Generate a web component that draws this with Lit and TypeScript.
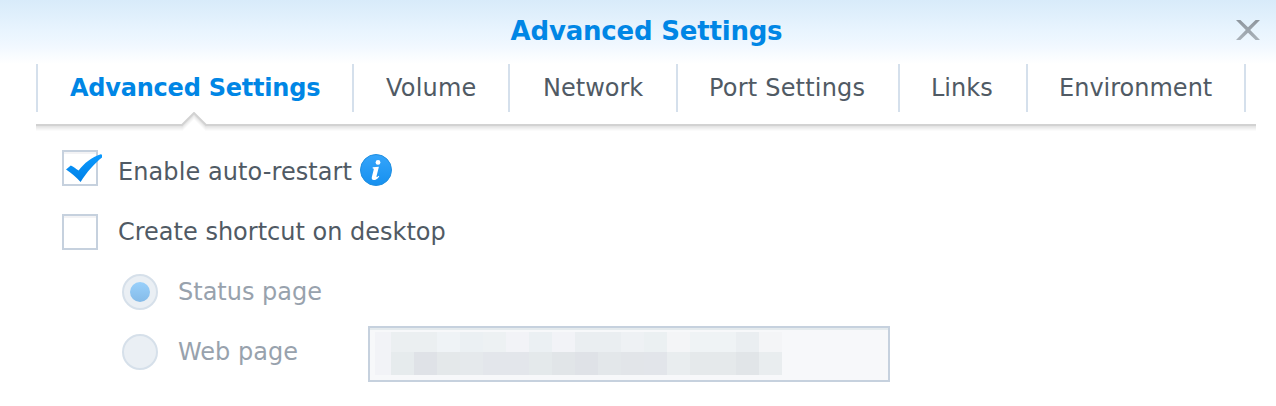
import { LitElement, html, svg, css } from "lit";
import { customElement } from "lit/decorators.js";

const TABS = [
  { id: "advanced", label: "Advanced Settings" },
  { id: "volume", label: "Volume" },
  { id: "network", label: "Network" },
  { id: "port", label: "Port Settings" },
  { id: "links", label: "Links" },
  { id: "environment", label: "Environment" },
];

// Two rows of masking blocks: [width, top colour, bottom colour]
const MASK: [number, string, string][] = [
  [16, "#f2f3f7", "#f2f3f7"],
  [23, "#ebeff1", "#e6ebed"],
  [23, "#ebeff1", "#dfe2e7"],
  [23, "#eff3f6", "#e4e8ea"],
  [23, "#ebf0f3", "#e5e9ec"],
  [23, "#edf1f3", "#e3e6eb"],
  [23, "#f2f3f7", "#e3e6eb"],
  [23, "#ebf0f3", "#e4e9eb"],
  [23, "#f2f3f7", "#e1e5e8"],
  [23, "#eaeef1", "#dfe2e7"],
  [23, "#eaeef1", "#e3e7ea"],
  [23, "#eef1f4", "#e2e5e9"],
  [23, "#ebf0f2", "#e2e5ea"],
  [23, "#f4f5f7", "#e9edef"],
  [23, "#eff3f5", "#e5e9eb"],
  [23, "#eff3f5", "#e5e9eb"],
  [23, "#eaeef1", "#e1e5e8"],
  [23, "#f4f5f7", "#e9edef"],
];

function maskRects() {
  let x = 0;
  return MASK.map(([w, top, bottom]) => {
    const left = x;
    x += w;
    return svg`<rect x=${left} y="0" width=${w} height="20" fill=${top}></rect>
      <rect x=${left} y="20" width=${w} height="23" fill=${bottom}></rect>`;
  });
}

function checkbox(checked: boolean) {
  return html`<svg class="check ${checked ? "checked" : ""}" width="36" height="36" viewBox="0 0 36 36">
    <defs>
      <linearGradient id="tick" x1="0" y1="0" x2="0" y2="1">
        <stop offset="0" stop-color="#0a9aff" />
        <stop offset="1" stop-color="#0080e6" />
      </linearGradient>
    </defs>
    <rect x="1" y="1" width="34" height="34" fill="#fff" stroke="#c6d1de" stroke-width="2" />
    <rect x="2" y="2" width="32" height="2" fill="#f3f3f5" />
    ${checked
      ? svg`<path d="M4 19.4L8.8 15.4C11.4 16.6 14 18.4 16.6 20.6C22.5 12.8 29.5 7.2 38.8 4.2L40 4.8V7.6C32.5 13.5 25 22 18.6 32C14.2 27.2 9.3 23 4 19.4Z" fill="url(#tick)"></path>`
      : ""}
  </svg>`;
}

function radio(selected: boolean) {
  return html`<svg width="36" height="36" viewBox="0 0 36 36">
    <defs>
      <linearGradient id="dot" x1="0" y1="0" x2="0" y2="1">
        <stop offset="0" stop-color="#99d0fb" />
        <stop offset="1" stop-color="#85bbe8" />
      </linearGradient>
    </defs>
    <circle cx="18" cy="18" r="17" fill="#eaeff4" stroke="#d6e0ea" stroke-width="2" />
    ${selected ? svg`<circle cx="18" cy="18" r="10" fill="url(#dot)"></circle>` : ""}
  </svg>`;
}

const RULE = "M0 13H146L158 1L170 13H1220";

@customElement("app-root")
export class AppRoot extends LitElement {
  static styles = css`
    :host {
      display: block;
      box-sizing: border-box;
      height: 406px;
      overflow: hidden;
      font-family: "DejaVu Sans", Verdana, sans-serif;
      font-size: 24px;
      line-height: 32px;
      color: #505a64;
      white-space: nowrap;
      background: linear-gradient(#d8ebfa 0, #e8f4fe 30px, #f1f8ff 46px, #fff 64px);
    }
    svg { display: block; flex: none; }
    header {
      display: grid;
      grid-template-columns: 60px 1fr 60px;
      align-items: center;
      height: 64px;
    }
    h1 {
      grid-column: 2;
      margin: 0;
      padding-left: 17px;
      text-align: center;
      font-size: 26px;
      line-height: 62px;
      height: 64px;
      letter-spacing: -0.2px;
      color: #0086e5;
    }
    .close { margin: 0 0 4px 20px; }
    nav {
      display: grid;
      grid-template-columns: 316px 156px 168px 222px 128px 220px;
      margin-left: 36px;
      height: 48px;
    }
    .tab {
      border-left: 2px solid #d5e0ec;
      padding-left: 32px;
      line-height: 49px;
      height: 48px;
    }
    .tab:last-child { border-right: 2px solid #d5e0ec; }
    .volume { letter-spacing: 0.2px; }
    .active { font-weight: bold; color: #0086e5; letter-spacing: -0.22px; }
    .network { padding-left: 33px; }
    .port, .links, .environment { padding-left: 31px; }
    .port { letter-spacing: 0.2px; }
    .rule { margin-left: 36px; }
    main { padding: 10px 0 0 62px; }
    .row { display: flex; align-items: center; height: 60px; }
    .row > svg { margin-right: 20px; }
    .check { overflow: visible; }
    .checked { margin-bottom: 8px; }
    .text-enable { width: 242px; letter-spacing: 0.08px; }
    .row > .info { margin: 0 0 4px; }
    .sub { padding-left: 60px; color: #98a2ad; }
    .field {
      box-sizing: border-box;
      width: 522px;
      height: 56px;
      margin-top: 4px;
      padding: 4px 5px;
      border: 2px solid #c6d1de;
      background: linear-gradient(#e4eaed 2px, #f7f8fa 2px);
    }
    .text-web { width: 190px; }
  `;

  render() {
    return html`
      <header>
        <h1>Advanced Settings</h1>
        <svg class="close" width="24" height="20" viewBox="0 0 24 20">
          <defs>
            <linearGradient id="cross" x1="0" y1="0" x2="0" y2="1">
              <stop offset="0" stop-color="#8e969e" />
              <stop offset="1" stop-color="#aab2ba" />
            </linearGradient>
          </defs>
          <path d="M0 0H4.4L12 7.2L19.6 0H24L14.2 10L24 20H19.6L12 12.8L4.4 20H0L9.8 10Z" fill="url(#cross)" />
        </svg>
      </header>
      <nav>
        ${TABS.map((t, i) => html`<div class="tab ${t.id} ${i === 0 ? "active" : ""}">${t.label}</div>`)}
      </nav>
      <svg class="rule" width="1220" height="20" viewBox="0 0 1220 20">
        <g fill="none" stroke-width="2">
          <path d=${RULE} transform="translate(0 5)" stroke="#fbfbfb" />
          <path d=${RULE} transform="translate(0 4)" stroke="#f6f6f6" />
          <path d=${RULE} transform="translate(0 3)" stroke="#f0f0f0" />
          <path d=${RULE} transform="translate(0 1.5)" stroke="#e4e4e4" />
          <path d=${RULE} stroke="#d2d2d2" />
        </g>
      </svg>
      <main>
        <div class="row">
          ${checkbox(true)}
          <span class="text-enable">Enable auto-restart</span>
          <svg class="info" width="32" height="32" viewBox="0 0 32 32">
            <defs>
              <linearGradient id="ball" x1="0" y1="0" x2="0" y2="1">
                <stop offset="0" stop-color="#35a5fb" />
                <stop offset="1" stop-color="#1690ef" />
              </linearGradient>
            </defs>
            <circle cx="16" cy="16" r="15.5" fill="url(#ball)" stroke="#218fe0" />
            <circle cx="18" cy="8.4" r="2.4" fill="#fff" />
            <path d="M12.8 13.2L18.9 12.8L16.5 22.2C16.3 23.3 17 23.4 18.7 21.7L19.2 22.4C17.4 25 15.5 26 13.7 26C11.9 26 11.4 24.8 11.9 22.8L13.7 15.8C13.9 14.8 13.7 14.5 12.5 14.2Z" fill="#fff" />
          </svg>
        </div>
        <div class="row">${checkbox(false)}<span>Create shortcut on desktop</span></div>
        <div class="row sub">${radio(true)}<span>Status page</span></div>
        <div class="row sub">
          ${radio(false)}
          <span class="text-web">Web page</span>
          <div class="field"><svg width="407" height="43">${maskRects()}</svg></div>
        </div>
      </main>
    `;
  }
}
